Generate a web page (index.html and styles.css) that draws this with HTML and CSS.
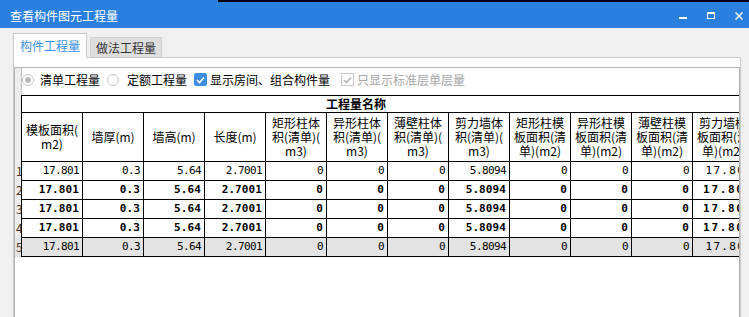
FILE: index.html
```html
<!DOCTYPE html>
<html lang="zh-CN">
<head>
  <meta charset="UTF-8" />
  <title>查看构件图元工程量</title>
  <link rel="stylesheet" href="styles.css">
</head>
<body>
  <div class="window">
    <div class="titlebar">
      <span class="title">查看构件图元工程量</span>
      <div class="controls">
        <svg width="8" height="8" viewBox="0 0 8 8"><rect x="0" y="5" width="8" height="2" fill="#fff"/></svg>
        <svg width="8" height="8" viewBox="0 0 8 8"><rect x="0.5" y="0.5" width="7" height="6" fill="none" stroke="#fff"/><rect x="0" y="0" width="8" height="2" fill="#fff"/></svg>
        <svg width="8" height="8" viewBox="0 0 8 8"><path d="M0.5 0.5L7.5 7.5M7.5 0.5L0.5 7.5" stroke="#fff" stroke-width="1.4"/></svg>
      </div>
    </div>

    <div class="tabs">
      <div class="tab active">构件工程量</div>
      <div class="tab">做法工程量</div>
    </div>

    <div class="tabpage">
      <div class="panel">
        <div class="options-row">
          <div class="gutter"></div>
          <div class="options">
            <label class="opt opt-1"><span class="radio checked"></span>清单工程量</label>
            <label class="opt opt-2"><span class="radio"></span>定额工程量</label>
            <label class="opt opt-3">
              <span class="check on"><svg width="9" height="8" viewBox="0 0 9 8"><path d="M1 4l2.5 2.5L8 1.5" fill="none" stroke="#fff" stroke-width="1.6"/></svg></span>显示房间、组合构件量
            </label>
            <label class="opt opt-4 disabled">
              <span class="check off"><svg width="9" height="8" viewBox="0 0 9 8"><path d="M1 4l2.5 2.5L8 1.5" fill="none" stroke="#b4b4b4" stroke-width="1.6"/></svg></span>只显示标准层单层量
            </label>
          </div>
        </div>

        <div class="grid">
          <div class="grid-row">
            <div class="gutter"></div>
            <div class="title-cell">工程量名称</div>
          </div>

          <div class="grid-row head">
            <div class="gutter"></div>
            <div class="cell">模板面积(<br>m2)</div>
            <div class="cell">墙厚(m)</div>
            <div class="cell">墙高(m)</div>
            <div class="cell">长度(m)</div>
            <div class="cell">矩形柱体<br>积(清单)(<br>m3)</div>
            <div class="cell">异形柱体<br>积(清单)(<br>m3)</div>
            <div class="cell">薄壁柱体<br>积(清单)(<br>m3)</div>
            <div class="cell">剪力墙体<br>积(清单)(<br>m3)</div>
            <div class="cell">矩形柱模<br>板面积(清<br>单)(m2)</div>
            <div class="cell">异形柱模<br>板面积(清<br>单)(m2)</div>
            <div class="cell">薄壁柱模<br>板面积(清<br>单)(m2)</div>
            <div class="cell">剪力墙模<br>板面积(清<br>单)(m2)</div>
          </div>

          <div class="grid-row data">
            <div class="gutter">1</div>
            <div class="cell">17.801</div><div class="cell">0.3</div><div class="cell">5.64</div><div class="cell">2.7001</div>
            <div class="cell">0</div><div class="cell">0</div><div class="cell">0</div><div class="cell">5.8094</div>
            <div class="cell">0</div><div class="cell">0</div><div class="cell">0</div><div class="cell last">17.801</div>
          </div>
          <div class="grid-row data bold">
            <div class="gutter">2</div>
            <div class="cell">17.801</div><div class="cell">0.3</div><div class="cell">5.64</div><div class="cell">2.7001</div>
            <div class="cell">0</div><div class="cell">0</div><div class="cell">0</div><div class="cell">5.8094</div>
            <div class="cell">0</div><div class="cell">0</div><div class="cell">0</div><div class="cell last">17.801</div>
          </div>
          <div class="grid-row data bold">
            <div class="gutter">3</div>
            <div class="cell">17.801</div><div class="cell">0.3</div><div class="cell">5.64</div><div class="cell">2.7001</div>
            <div class="cell">0</div><div class="cell">0</div><div class="cell">0</div><div class="cell">5.8094</div>
            <div class="cell">0</div><div class="cell">0</div><div class="cell">0</div><div class="cell last">17.801</div>
          </div>
          <div class="grid-row data bold">
            <div class="gutter">4</div>
            <div class="cell">17.801</div><div class="cell">0.3</div><div class="cell">5.64</div><div class="cell">2.7001</div>
            <div class="cell">0</div><div class="cell">0</div><div class="cell">0</div><div class="cell">5.8094</div>
            <div class="cell">0</div><div class="cell">0</div><div class="cell">0</div><div class="cell last">17.801</div>
          </div>
          <div class="grid-row data selected">
            <div class="gutter">5</div>
            <div class="cell">17.801</div><div class="cell">0.3</div><div class="cell">5.64</div><div class="cell">2.7001</div>
            <div class="cell">0</div><div class="cell">0</div><div class="cell">0</div><div class="cell">5.8094</div>
            <div class="cell">0</div><div class="cell">0</div><div class="cell">0</div><div class="cell last">17.801</div>
          </div>
        </div>
      </div>
    </div>
  </div>
</body>
</html>
```

FILE: styles.css
```css
* {
  box-sizing: border-box;
  margin: 0;
  padding: 0;
}

html, body {
  background: #f0f0f0;
  overflow: hidden;
  font-family: "Noto Sans CJK SC", sans-serif;
  font-size: 12px;
  color: #000;
}

.window {
  height: 340px;
  display: flex;
  flex-direction: column;
}

/* title bar */
.titlebar {
  flex: none;
  height: 28px;
  display: flex;
  justify-content: space-between;
  padding: 0 6px 0 10px;
  color: #fff;
  background: linear-gradient(to right, #2b7fdf 218px, #000 218px) top / 100% 2px no-repeat, #2b7fdf;
}

.title {
  font-size: 12px;
  line-height: 14px;
  padding-top: 9px;
}

.controls {
  display: flex;
  gap: 20px;
  padding-top: 12px;
}

.controls svg {
  display: block;
}

/* tabs */
.tabs {
  flex: none;
  height: 29px;
  display: flex;
  align-items: flex-end;
  gap: 3px;
  padding-left: 13px;
}

.tab {
  width: 72px;
  height: 20px;
  background: #dedede;
  border: 1px solid #d4d4d4;
  border-bottom: none;
  text-align: center;
  line-height: 19px;
  color: #333;
}

.tab.active {
  position: relative;
  width: 74px;
  height: 25px;
  margin-bottom: -1px;
  background: #fff;
  border-color: #c9c9c9;
  line-height: 23px;
  color: #3c8ee6;
}

.tabpage {
  flex: 1;
  margin: 0 8px 0 13px;
  padding-top: 9px;
  background: #fff;
  border: 1px solid #c9c9c9;
  display: flex;
  flex-direction: column;
}

.panel {
  flex: 1;
  background: #fff;
  border: 1px solid #b4b4b4;
  border-bottom: none;
  overflow: hidden;
}

/* options */
.options-row {
  display: flex;
  height: 27px;
}

.gutter {
  flex: none;
  width: 7px;
  background: #ececec;
  border-right: 1px solid #c4c4c4;
}

.options {
  display: flex;
  align-items: center;
  padding-bottom: 4px;
  white-space: nowrap;
}

.opt {
  display: flex;
  align-items: center;
  line-height: 14px;
}

.opt-1 { gap: 6px; margin-right: 7px; }
.opt-2 { gap: 8px; margin-right: 7px; }
.opt-3 { gap: 3px; margin-right: 11px; }
.opt-4 { gap: 3px; }

.disabled {
  color: #a6a6a6;
}

.radio {
  width: 12px;
  height: 12px;
  border-radius: 50%;
  border: 1px solid #c6c6c6;
  background: #fff;
  display: flex;
  align-items: center;
  justify-content: center;
}

.radio.checked::after {
  content: "";
  width: 6px;
  height: 6px;
  border-radius: 50%;
  background: #b8b8b8;
}

.check {
  width: 13px;
  height: 13px;
  display: flex;
  align-items: center;
  justify-content: center;
}

.check.on {
  background: #3c8ee6;
  border-radius: 2px;
}

.check.off {
  border: 1px solid #c8c8c8;
  background: #fff;
}

/* grid */
.grid-row {
  display: flex;
}

.grid-row .gutter {
  border-right-color: #000;
}

.title-cell {
  flex: none;
  width: 732px;
  height: 18px;
  border-top: 1px solid #000;
  border-bottom: 1px solid #000;
  padding-right: 64px;
  text-align: center;
  font-weight: bold;
  line-height: 16px;
}

.cell {
  flex: none;
  width: 61px;
  border-right: 1px solid #000;
  border-bottom: 1px solid #000;
}

.head .cell {
  height: 49px;
  display: flex;
  align-items: center;
  justify-content: center;
  text-align: center;
  line-height: 14px;
  white-space: nowrap;
}

.data .cell {
  height: 19px;
  padding-right: 3px;
  text-align: right;
  font-family: "DejaVu Sans Mono", monospace;
  font-size: 11px;
  letter-spacing: -0.6px;
  line-height: 18px;
  white-space: nowrap;
  overflow: hidden;
}

.data .cell.last {
  padding-right: 0;
  letter-spacing: 1.3px;
}

.data .gutter {
  font-size: 12px;
  line-height: 18px;
  color: #4a3622;
  padding-left: 1px;
  overflow: hidden;
}

.bold .cell {
  font-weight: bold;
  letter-spacing: 0.1px;
}

.bold .cell.last {
  letter-spacing: 1.7px;
}

.selected .cell,
.selected .gutter {
  background: #e3e3e3;
}
```
